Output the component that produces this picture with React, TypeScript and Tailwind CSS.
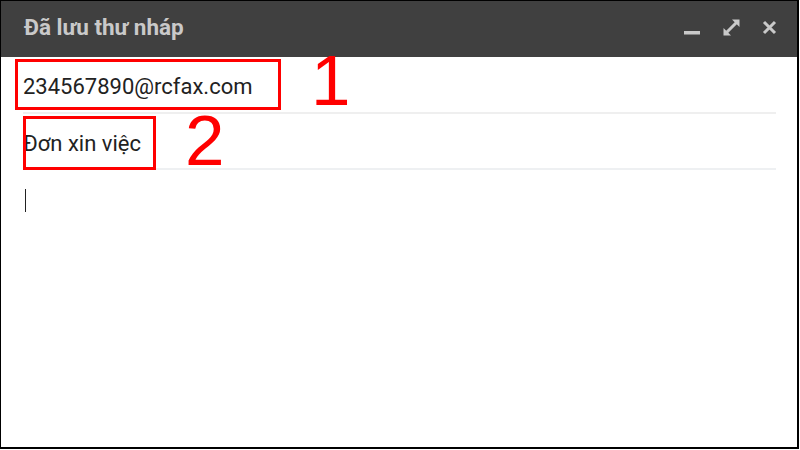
import React from "react";

export default function App() {
  return (
    <div className="w-[800px] h-[450px] bg-white">
      <div className="relative w-[799px] h-[449px] border-l border-t border-r-2 border-b-2 border-black bg-white flex flex-col overflow-hidden">
        <div className="h-[56px] bg-[#404040] flex items-center pl-[23px] pr-[20px] shrink-0">
          <div className="font-['Roboto',sans-serif] font-bold text-[22.5px] text-[#c9c9c9] leading-none -mt-[3px]">
            Đã lưu thư nháp
          </div>
          <div className="ml-auto flex items-center gap-[22px] text-[#c9c9c9] -mt-[3px]">
            <svg width="17" height="17" viewBox="0 0 17 17">
              <rect x="0" y="12" width="16" height="3.5" fill="#c9c9c9" />
            </svg>
            <svg width="17" height="17" viewBox="0 0 17 17">
              <path d="M3 14 L14 3" stroke="#c9c9c9" strokeWidth="3" />
              <path d="M9 0.5 H16.5 V8 Z" fill="#c9c9c9" />
              <path d="M0.5 9 V16.5 H8 Z" fill="#c9c9c9" />
            </svg>
            <svg width="15" height="15" viewBox="0 0 15 15">
              <path d="M2 2 L13 13 M13 2 L2 13" stroke="#c9c9c9" strokeWidth="3" />
            </svg>
          </div>
        </div>

        <div className="font-['Roboto',sans-serif] text-[22px] text-[#222222] flex flex-col pl-[22px] pr-[21px]">
          <div className="h-[57px] flex items-center border-b-2 border-[#efefef] pt-[3px]">
            <span>234567890@rcfax.com</span>
          </div>
          <div className="h-[56px] flex items-center border-b-2 border-[#eef0f2] pt-[4px]">
            <span>Đơn xin việc</span>
          </div>
          <div className="pt-[19px] pl-[2px]">
            <div className="w-[1px] h-[23px] bg-[#222]" />
          </div>
        </div>

        <div className="absolute left-[14px] top-[58px] w-[266px] h-[51px] border-[3px] border-[#ff0000]" />
        <div className="absolute left-[22px] top-[115px] w-[133px] h-[54px] border-[3px] border-[#ff0000]" />
        <div className="absolute left-[310px] top-[44px] font-['Liberation_Sans',sans-serif] text-[71px] leading-none text-[#ff0000]">
          1
        </div>
        <div className="absolute left-[184px] top-[104px] font-['Liberation_Sans',sans-serif] text-[71px] leading-none text-[#ff0000]">
          2
        </div>
      </div>
    </div>
  );
}
